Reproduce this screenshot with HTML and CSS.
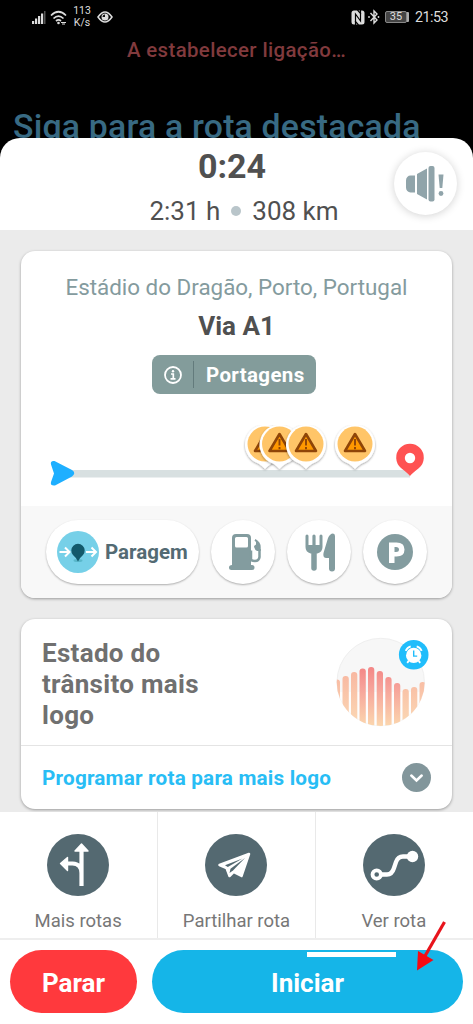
FILE: index.html
```html
<!DOCTYPE html>
<html lang="pt">
<head>
<meta charset="utf-8">
<title>Rota</title>
<link rel="stylesheet" href="styles.css">
</head>
<body>
<div class="phone">
  <header class="top">
    <div class="status">
      <svg class="status-left" width="36" height="18" viewBox="0 0 36 18">
        <g fill="#ddd"><rect x="0" y="13" width="2.2" height="3"/><rect x="3" y="10.500" width="2.200" height="5.500"/><rect x="6" y="8" width="2.200" height="8"/><rect x="9" y="5.500" width="2.200" height="10.500"/><rect x="12" y="3" width="1.500" height="13" fill="#555"/></g>
        <g fill="none" stroke="#ddd" stroke-width="1.700"><path d="M19 7.500Q26.500 0 34 7.500"/><path d="M21.500 10.500Q26.500 5.500 31.500 10.500"/><path d="M24 13Q26.500 10.800 29 13"/></g>
        <circle cx="26.500" cy="15" r="1.300" fill="#ddd"/><path d="M29 14.500h5M30 16h3" stroke="#ddd"/>
      </svg>
      <div class="speed"><span>113</span><span>K/s</span></div>
      <svg class="eye" width="16" height="12" viewBox="0 0 16 12"><path d="M1 6Q8-4 15 6Q8 16 1 6Z" fill="none" stroke="#ddd" stroke-width="1.500"/><circle cx="8" cy="6" r="3.500" fill="#ddd"/><path d="M8 6V3.500A2.500 2.500 0 0 0 5.500 6Z" fill="#111"/></svg>
      <span class="spacer"></span>
      <svg class="nfc" width="14" height="15" viewBox="0 0 14 15"><rect x=".5" y=".5" width="13" height="14" rx="2.500" fill="#ddd"/><path d="M4.500 15V4L9.500 11V0M6.500 0L10 4M4 11L7.500 15" fill="none" stroke="#000" stroke-width="1.200"/></svg>
      <svg class="bt" width="12" height="16" viewBox="0 0 12 16"><path d="M2.500 4L9 11L6 14V2L9 5L2.500 12" fill="none" stroke="#ddd" stroke-width="1.400"/><circle cx="1" cy="8" r=".9" fill="#ddd"/><circle cx="10.500" cy="8" r=".9" fill="#ddd"/></svg>
      <span class="battery">35</span>
      <span class="clock">21:53</span>
    </div>
    <div class="connecting">A estabelecer ligação…</div>
    <div class="headline">Siga para a rota destacada</div>
  </header>

  <section class="summary">
    <div class="eta">0:24</div>
    <div class="trip"><span class="dur">2:31 h</span><i class="dot"></i><span class="dist">308 km</span></div>
    <button class="sound" aria-label="Som">
      <svg width="64" height="64" viewBox="0 0 64 64" fill="#90a4aa"><path d="M21 23.500v17h-4.500a4.500 5 0 0 1-4.500-5v-7a4.500 5 0 0 1 4.500-5Z"/><path d="M23 22L33 16.500V47.500L23 42Z"/><rect x="34.500" y="14" width="6" height="35.500" rx="2"/><path d="M44.500 22.500h5L48.300 36h-2.600Z"/><circle cx="47" cy="41.500" r="2.400"/></svg>
    </button>
  </section>

  <main class="content">
    <article class="card route">
      <div class="place">Estádio do Dragão, Porto, Portugal</div>
      <div class="via">Via A1</div>
      <div class="toll">
        <svg width="18" height="18" viewBox="0 0 18 18"><circle cx="9" cy="9" r="8" fill="none" stroke="#fff" stroke-width="1.800"/><circle cx="9" cy="5.300" r="1.200" fill="#fff"/><path d="M7 8h2.300v4.500M6.500 12.800h5" fill="none" stroke="#fff" stroke-width="1.700"/></svg>
        <i class="bar"></i><span>Portagens</span>
      </div>
      <svg class="track" width="431" height="66" viewBox="0 0 431 66">
        <defs>
          <filter id="pinshadow" x="-20%" y="-20%" width="140%" height="150%"><feDropShadow dx="0" dy="1" stdDeviation="1" flood-opacity=".38"/></filter>
          <g id="alert">
            <path filter="url(#pinshadow)" fill="#fff" d="M0 25C-3 22-5 20-10 18A20 20 0 1 1 10 18C5 20 3 22 0 25Z"/>
            <circle r="17.500" fill="#ffc568"/>
            <path d="M0-10L10 7H-10Z" fill="#ff9800" stroke="#8f4508" stroke-width="2.600" stroke-linejoin="round"/>
            <path d="M0-5V1.500M0 3v2.200" stroke="#8f4508" stroke-width="1.900"/>
          </g>
        </defs>
        <rect x="40" y="45" width="349" height="7.500" fill="#d8e0e1"/>
        <path d="M30 39.500Q29 35.500 33.500 36L51 45Q55.500 48 51 51.500L34 60.500Q29 61 30 57L33 48.500Z" fill="#1eafff"/>
        <use href="#alert" x="244" y="19"/><use href="#alert" x="258.500" y="19"/><use href="#alert" x="285" y="19"/><use href="#alert" x="334" y="19"/>
        <path d="M389 51Q387 48.500 380 43A13.800 13.800 0 1 1 398 43Q391 48.500 389 51Z" fill="#ff5252"/>
        <circle cx="389" cy="33" r="5.200" fill="#fff"/>
      </svg>
      <div class="stops">
        <button class="stop-main">
          <svg width="42" height="42" viewBox="0 0 42 42"><circle cx="21" cy="21" r="21" fill="#76d0e8"/><path d="M2.500 21H12M8 16.500L12.500 21L8 25.500M29 21h9.500M34.500 16.500L39 21L34.500 25.500" fill="none" stroke="#fff" stroke-width="2"/><ellipse cx="21" cy="29.500" rx="4.500" ry="1.500" fill="#59b7cb"/><path d="M21 30.500Q19.500 27 16 24A6.700 6.700 0 1 1 26 24Q22.500 27 21 30.500Z" fill="#12596b"/></svg>
          <span>Paragem</span>
        </button>
        <button class="stop" aria-label="Combustível"><svg width="64" height="64" viewBox="0 0 64 64" fill="#839c9f"><path fill-rule="evenodd" d="M21 18q0-4 4-4h11q4 0 4 4v27h1q2.500 0 2.500 2.500T41 50H20.500Q18 50 18 47.500T21 45ZM25.500 17q-1.500 0-1.500 1.500V26q0 1.500 1.500 1.500h10Q37 27.500 37 26v-7.500Q37 17 35.500 17Z"/><path d="M40 30.500V39q0 2 4 2t4.500-4V29" fill="none" stroke="#839c9f" stroke-width="2.500"/><path d="M44.500 19q5.200 3 5.200 8v4h-3.500q-3.200-1.500-3.200-5l2-1.500V22l-1.500-1.500Z"/></svg></button>
        <button class="stop" aria-label="Restauração"><svg width="64" height="64" viewBox="0 0 64 64" fill="#839c9f"><path d="M20 16v11q0 4 4 5h6q4-1 4-5V16" fill="none" stroke="#839c9f" stroke-width="3" stroke-linecap="round"/><path d="M27 16V31" stroke="#839c9f" stroke-width="3.200" stroke-linecap="round"/><path d="M20 25h14q0 7-5 8h-4q-5-1-5-8Z"/><path d="M27 31V48" stroke="#839c9f" stroke-width="5.500" stroke-linecap="round"/><path d="M48 16v32.500q0 3-3 3t-3-3V38h-2.500q-4 0-3-5L41 18q2-4.500 5-4.500 2 0 2 2.500Z"/></svg></button>
        <button class="stop" aria-label="Estacionamento"><svg width="64" height="64" viewBox="0 0 64 64"><circle cx="32" cy="32" r="18" fill="#839c9f"/><path fill-rule="evenodd" fill="#fff" d="M26 22.500h7.500q8 0 8 7t-8 7H31.500V43H26ZM31.500 27v5H33q3 0 3-2.500T33 27Z"/></svg></button>
      </div>
    </article>

    <article class="card later">
      <div class="later-top">
        <h2>Estado do<br>trânsito mais<br>logo</h2>
        <svg class="chart" width="96" height="94" viewBox="0 0 96 94">
          <defs>
            <clipPath id="disc"><circle cx="44.700" cy="46" r="44"/></clipPath>
            <linearGradient id="heat" gradientUnits="userSpaceOnUse" x1="0" y1="30" x2="0" y2="90"><stop offset="0" stop-color="#f38585"/><stop offset=".35" stop-color="#f6a199"/><stop offset="1" stop-color="#fbd6ae"/></linearGradient>
            <linearGradient id="warm" gradientUnits="userSpaceOnUse" x1="0" y1="35" x2="0" y2="90"><stop offset="0" stop-color="#f8b7a1"/><stop offset="1" stop-color="#fbd9b5"/></linearGradient>
          </defs>
          <circle cx="44.700" cy="46" r="43.700" fill="#f7f7f7" stroke="#efefef"/>
          <g clip-path="url(#disc)"><rect y="56" width="96" height="40" fill="#fff" opacity=".7"/>
            <g fill="url(#warm)"><rect x="-2" y="43.500" width="6" height="60" rx="3"/><rect x="6.500" y="40" width="6.300" height="60" rx="3"/><rect x="15" y="36" width="6.300" height="60" rx="3"/><rect x="66.500" y="53" width="6.300" height="50" rx="3"/><rect x="75" y="51" width="6.300" height="50" rx="3"/><rect x="83.500" y="46" width="6.300" height="50" rx="3"/></g>
            <g fill="url(#heat)"><rect x="23.500" y="32.500" width="6.300" height="70" rx="3"/><rect x="32" y="31" width="6.300" height="70" rx="3"/><rect x="40.700" y="35" width="6.300" height="70" rx="3"/><rect x="49.300" y="41" width="6.300" height="70" rx="3"/><rect x="58" y="47" width="6.300" height="70" rx="3"/></g>
          </g>
          <g transform="translate(-.8 1.900)">
          <circle cx="78.500" cy="16.800" r="14.800" fill="#20bdfb"/>
          <circle cx="78.500" cy="17.500" r="7.700" fill="#fff"/><path d="M70.500 13q1.500-3.500 5-4.500M86.500 13Q85 9.500 81.500 8.500" stroke="#fff" stroke-width="1.800" fill="none"/><path d="M73.500 23l-1.500 2M83.500 23l1.500 2" stroke="#fff" stroke-width="1.800"/><path d="M78.500 12.500v5.700h3.500" stroke="#20bdfb" stroke-width="1.400" fill="none"/>
          </g>
        </svg>
      </div>
      <div class="later-link"><span>Programar rota para mais logo</span>
        <svg width="30" height="30" viewBox="0 0 30 30"><circle cx="14.500" cy="14.500" r="14.500" fill="#82969b"/><path d="M9.300 12.500L14.500 17.500L19.700 12.500" fill="none" stroke="#fff" stroke-width="2.500" stroke-linecap="round"/></svg>
      </div>
    </article>
  </main>

  <nav class="actions">
    <a class="action"><svg width="62" height="62" viewBox="0 0 62 62"><circle cx="31" cy="31" r="31" fill="#546971"/><path d="M34.500 52V16M34.500 39q0-9-9-9.500H20" fill="none" stroke="#fff" stroke-width="4.200"/><path d="M34.500 10L41 17H28ZM13.500 29.500L20.500 23.500V36.500Z" fill="#fff" stroke="#fff" stroke-width="1.400" stroke-linejoin="round"/></svg><span>Mais rotas</span></a>
    <a class="action"><svg width="62" height="62" viewBox="0 0 62 62"><circle cx="31" cy="31" r="31" fill="#546971"/><path d="M14.500 31L44 20L36.500 42L28.500 38L24.500 42L21.500 34Z" fill="#fff" stroke="#fff" stroke-width="2.500" stroke-linejoin="round"/><path d="M20 31.300L37.500 24.500L22.800 33Z" fill="#546971"/><path d="M24.500 39L25.500 34.800L40 24L28 36.500Z" fill="#546971"/></svg><span>Partilhar rota</span></a>
    <a class="action"><svg width="62" height="62" viewBox="0 0 62 62"><circle cx="31" cy="31" r="31" fill="#546971"/><path d="M14 40.500H24Q29 40.500 31 34L33 28Q35 22.500 40 22.500H49" fill="none" stroke="#fff" stroke-width="4.300"/><circle cx="13.700" cy="40.500" r="4.200" fill="#546971" stroke="#fff" stroke-width="3.800"/><circle cx="49.500" cy="22.500" r="5.700" fill="#fff"/></svg><span>Ver rota</span></a>
  </nav>

  <footer class="buttons">
    <button class="btn stop-btn"><span>Parar</span></button>
    <button class="btn start-btn"><span>Iniciar</span><i class="progress"></i></button>
    <svg class="pointer" width="32" height="52" viewBox="0 0 32 52"><path d="M29.500 2L10 36" stroke="#e8141c" stroke-width="3.200"/><path d="M2 50.500L3 31L18.500 40Z" fill="#f60a12"/></svg>
  </footer>
</div>
</body>
</html>
```

FILE: styles.css
```css
* { box-sizing: border-box; }
body { margin: 0; background: #000; font-family: Roboto, "Liberation Sans", sans-serif; }
svg { display: block; flex: none; }
button { border: 0; padding: 0; font: inherit; background: #fff; }
.phone { width: 473px; height: 1024px; overflow: hidden; display: flex; flex-direction: column; background: #000; }

.top { height: 138px; flex: none; }
.status { height: 32px; display: flex; align-items: center; padding: 2px 25px 0 32px; color: #ddd; }
.speed { display: flex; flex-direction: column; align-items: center; width: 18px; margin-left: 5px; font-size: 10.5px; line-height: 12px; }
.eye { margin-left: 6px; }
.spacer { flex: 1; }
.bt { margin-left: 3px; }
.battery { width: 22px; height: 12px; margin: 0 8px 0 5px; border: 1px solid #888; border-radius: 2px; background: #444; font-size: 11px; line-height: 10px; text-align: center; box-shadow: 3px 0 0 -1px #aaa; }
.clock { width: 33px; font-size: 14.3px; letter-spacing: -.5px; white-space: nowrap; }
.connecting { height: 36px; line-height: 37px; text-align: center; font-size: 20.4px; font-weight: 500; color: #813a3d; letter-spacing: .38px; }
.headline { padding: 37px 0 0 13px; line-height: 44px; font-size: 33.8px; letter-spacing: .2px; font-weight: 500; color: #386a83; white-space: nowrap; }

.summary { position: relative; height: 92px; flex: none; padding-right: 9px; background: #fff; border-radius: 20px 20px 0 0; text-align: center; color: #505050; }
.eta { padding-top: 8px; font-size: 34px; line-height: 40px; font-weight: 700; }
.trip { display: flex; align-items: center; justify-content: center; gap: 11px; padding-left: 24px; font-size: 26px; line-height: 50px; }
.dot { width: 10px; height: 10px; border-radius: 50%; background: #b9c5ca; }
.sound { position: absolute; left: 394px; top: 14px; width: 63px; height: 63px; border-radius: 50%; box-shadow: 0 1px 9px rgba(0,0,0,.18); }

.content { height: 582px; flex: none; padding: 21px 21px 0; background: #ebebeb; overflow: hidden; }
.card { width: 431px; border-radius: 14px; background: #fff; overflow: hidden; box-shadow: 0 1px 3px rgba(0,0,0,.35); }
.route { height: 347px; display: flex; flex-direction: column; align-items: center; }
.place { margin-top: 20px; font-size: 22.4px; line-height: 32px; color: #849b9e; white-space: nowrap; }
.via { margin-top: 7px; font-size: 26px; line-height: 33px; font-weight: 700; color: #505050; }
.toll { width: 164px; height: 39px; margin-top: 12px; margin-right: 5px; padding-left: 12px; display: flex; align-items: center; border-radius: 8px; background: #839c9b; color: #fff; font-size: 20.5px; font-weight: 700; letter-spacing: .35px; }
.bar { width: 1px; height: 27px; margin: 0 12px 0 11px; background: #637b7c; }
.track { margin-top: 31px; }
.stops { display: flex; gap: 12px; width: 431px; height: 92px; margin-top: 15px; padding: 14px 25px; background: #f8f8f8; }
.stop-main, .stop { height: 64px; border-radius: 32px; box-shadow: 0 1px 2px rgba(0,0,0,.3); }
.stop { width: 64px; flex: none; }
.stop-main { width: 153px; flex: none; padding-left: 11px; display: flex; align-items: center; gap: 6px; font-size: 20.5px; font-weight: 700; color: #536a73; }

.later { height: 190px; margin-top: 21px; }
.later-top { height: 127px; display: flex; justify-content: space-between; padding: 17px 20px 0 21px; border-bottom: 1px solid #e4e4e4; }
.later h2 { margin: 2px 0 0; font-size: 26px; letter-spacing: .3px; line-height: 31px; font-weight: 700; color: #707070; white-space: nowrap; }
.later-link { height: 63px; display: flex; align-items: center; justify-content: space-between; padding: 0 20px 0 21px; font-size: 20.7px; letter-spacing: .2px; font-weight: 700; color: #28bdf5; white-space: nowrap; }

.actions { height: 128px; flex: none; display: flex; padding-right: 1px; background: #fff; border-bottom: 2px solid #eee; }
.action { flex: 1; display: flex; flex-direction: column; align-items: center; padding-top: 22px; font-size: 18.5px; line-height: 24px; color: #777; border-left: 1px solid #e9e9e9; }
.action:first-child { border-left: 0; padding-right: 1px; }
.action span { margin-top: 13px; white-space: nowrap; }

.buttons { position: relative; flex: 1; display: flex; gap: 15px; padding: 10px 10px 11px; background: #fff; }
.btn { height: 63px; padding-top: 2px; border-radius: 32px; color: #fff; font-size: 26px; font-weight: 700; }
.stop-btn { width: 127px; background: #ff393d; }
.start-btn { position: relative; width: 311px; background: #15b5e8; }
.progress { position: absolute; left: 155px; top: 1.500px; width: 89px; height: 5px; background: #fff; }
.pointer { position: absolute; left: 415px; top: -20px; }
```
